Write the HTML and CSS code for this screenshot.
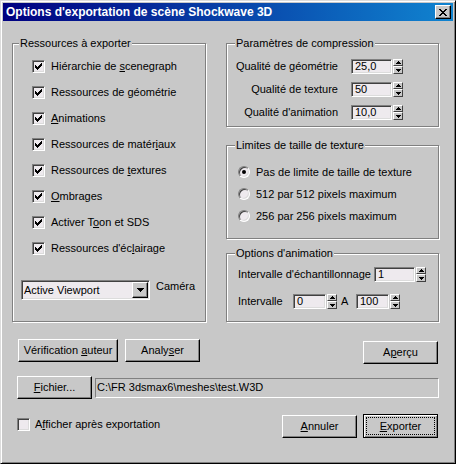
FILE: index.html
```html
<!DOCTYPE html>
<html lang="fr">
<head>
<meta charset="utf-8">
<title>Options d'exportation de scène Shockwave 3D</title>
<link rel="stylesheet" href="styles.css">
</head>
<body>
<div class="window">
  <div class="titlebar">
    <span class="title">Options d'exportation de scène Shockwave 3D</span>
    <span class="close btn"><svg width="8" height="7" viewBox="0 0 8 7" shape-rendering="crispEdges"><path d="M0 0h2v1H0zM6 0h2v1H6zM1 1h2v1H1zM5 1h2v1H5zM2 2h4v1H2zM3 3h2v1H3zM2 4h4v1H2zM1 5h2v1H1zM5 5h2v1H5zM0 6h2v1H0zM6 6h2v1H6z" fill="#000"/></svg></span>
  </div>
  <div class="client">
    <div class="top">
      <div class="group g-res">
        <span class="gtitle">Ressources à exporter</span>
        <div class="checklist">
          <div class="chk"><span class="box sunken"><svg class="tick" width="7" height="7" viewBox="0 0 7 7" shape-rendering="crispEdges"><path d="M0 2h1v3H0zM1 3h1v3H1zM2 4h1v3H2zM3 3h1v3H3zM4 2h1v3H4zM5 1h1v3H5zM6 0h1v3H6z"/></svg></span><span>Hiérarchie de <u>s</u>cenegraph</span></div>
          <div class="chk"><span class="box sunken"><svg class="tick" width="7" height="7" viewBox="0 0 7 7" shape-rendering="crispEdges"><path d="M0 2h1v3H0zM1 3h1v3H1zM2 4h1v3H2zM3 3h1v3H3zM4 2h1v3H4zM5 1h1v3H5zM6 0h1v3H6z"/></svg></span><span>Ressources de géométrie</span></div>
          <div class="chk"><span class="box sunken"><svg class="tick" width="7" height="7" viewBox="0 0 7 7" shape-rendering="crispEdges"><path d="M0 2h1v3H0zM1 3h1v3H1zM2 4h1v3H2zM3 3h1v3H3zM4 2h1v3H4zM5 1h1v3H5zM6 0h1v3H6z"/></svg></span><span><u>A</u>nimations</span></div>
          <div class="chk"><span class="box sunken"><svg class="tick" width="7" height="7" viewBox="0 0 7 7" shape-rendering="crispEdges"><path d="M0 2h1v3H0zM1 3h1v3H1zM2 4h1v3H2zM3 3h1v3H3zM4 2h1v3H4zM5 1h1v3H5zM6 0h1v3H6z"/></svg></span><span>Ressources de matér<u>i</u>aux</span></div>
          <div class="chk"><span class="box sunken"><svg class="tick" width="7" height="7" viewBox="0 0 7 7" shape-rendering="crispEdges"><path d="M0 2h1v3H0zM1 3h1v3H1zM2 4h1v3H2zM3 3h1v3H3zM4 2h1v3H4zM5 1h1v3H5zM6 0h1v3H6z"/></svg></span><span>Ressources de <u>t</u>extures</span></div>
          <div class="chk"><span class="box sunken"><svg class="tick" width="7" height="7" viewBox="0 0 7 7" shape-rendering="crispEdges"><path d="M0 2h1v3H0zM1 3h1v3H1zM2 4h1v3H2zM3 3h1v3H3zM4 2h1v3H4zM5 1h1v3H5zM6 0h1v3H6z"/></svg></span><span><u>O</u>mbrages</span></div>
          <div class="chk"><span class="box sunken"><svg class="tick" width="7" height="7" viewBox="0 0 7 7" shape-rendering="crispEdges"><path d="M0 2h1v3H0zM1 3h1v3H1zM2 4h1v3H2zM3 3h1v3H3zM4 2h1v3H4zM5 1h1v3H5zM6 0h1v3H6z"/></svg></span><span>Activer T<u>o</u>on et SDS</span></div>
          <div class="chk"><span class="box sunken"><svg class="tick" width="7" height="7" viewBox="0 0 7 7" shape-rendering="crispEdges"><path d="M0 2h1v3H0zM1 3h1v3H1zM2 4h1v3H2zM3 3h1v3H3zM4 2h1v3H4zM5 1h1v3H5zM6 0h1v3H6z"/></svg></span><span>Ressources d'éc<u>l</u>airage</span></div>
        </div>
        <div class="camrow">
          <div class="combo sunken"><span class="combo-text">Active Viewport</span><span class="combo-btn btn"><svg width="7" height="4" viewBox="0 0 7 4" shape-rendering="crispEdges"><path d="M0 0h7v1H0zM1 1h5v1H1zM2 2h3v1H2zM3 3h1v1H3z"/></svg></span></div>
          <span class="cam-label">Caméra</span>
        </div>
      </div>
      <div class="rightcol">
        <div class="group g-comp">
          <span class="gtitle">Paramètres de compression</span>
          <div class="field"><span class="flabel">Qualité de géométrie</span><span class="edit sunken w41 ml13">25,0</span><span class="spin"><span class="up"><svg width="5" height="3" viewBox="0 0 5 3" shape-rendering="crispEdges"><path d="M2 0h1v1H2zM1 1h3v1H1zM0 2h5v1H0z"/></svg></span><span class="dn"><svg width="5" height="3" viewBox="0 0 5 3" shape-rendering="crispEdges"><path d="M0 0h5v1H0zM1 1h3v1H1zM2 2h1v1H2z"/></svg></span></span></div>
          <div class="field"><span class="flabel">Qualité de texture</span><span class="edit sunken w41 ml13">50</span><span class="spin"><span class="up"><svg width="5" height="3" viewBox="0 0 5 3" shape-rendering="crispEdges"><path d="M2 0h1v1H2zM1 1h3v1H1zM0 2h5v1H0z"/></svg></span><span class="dn"><svg width="5" height="3" viewBox="0 0 5 3" shape-rendering="crispEdges"><path d="M0 0h5v1H0zM1 1h3v1H1zM2 2h1v1H2z"/></svg></span></span></div>
          <div class="field"><span class="flabel">Qualité d'animation</span><span class="edit sunken w41 ml13">10,0</span><span class="spin"><span class="up"><svg width="5" height="3" viewBox="0 0 5 3" shape-rendering="crispEdges"><path d="M2 0h1v1H2zM1 1h3v1H1zM0 2h5v1H0z"/></svg></span><span class="dn"><svg width="5" height="3" viewBox="0 0 5 3" shape-rendering="crispEdges"><path d="M0 0h5v1H0zM1 1h3v1H1zM2 2h1v1H2z"/></svg></span></span></div>
        </div>
        <div class="group g-lim">
          <span class="gtitle">Limites de taille de texture</span>
          <div class="radio-row"><span class="radio"><span class="dot"></span></span><span>Pas de limite de taille de texture</span></div>
          <div class="radio-row"><span class="radio"></span><span>512 par 512 pixels maximum</span></div>
          <div class="radio-row"><span class="radio"></span><span>256 par 256 pixels maximum</span></div>
        </div>
        <div class="group g-anim">
          <span class="gtitle">Options d'animation</span>
          <div class="arow"><span class="alabel1">Intervalle d'échantillonnage</span><span class="edit sunken w41">1</span><span class="spin"><span class="up"><svg width="5" height="3" viewBox="0 0 5 3" shape-rendering="crispEdges"><path d="M2 0h1v1H2zM1 1h3v1H1zM0 2h5v1H0z"/></svg></span><span class="dn"><svg width="5" height="3" viewBox="0 0 5 3" shape-rendering="crispEdges"><path d="M0 0h5v1H0zM1 1h3v1H1zM2 2h1v1H2z"/></svg></span></span></div>
          <div class="arow arow2"><span class="alabel2">Intervalle</span><span class="edit sunken w33">0</span><span class="spin"><span class="up"><svg width="5" height="3" viewBox="0 0 5 3" shape-rendering="crispEdges"><path d="M2 0h1v1H2zM1 1h3v1H1zM0 2h5v1H0z"/></svg></span><span class="dn"><svg width="5" height="3" viewBox="0 0 5 3" shape-rendering="crispEdges"><path d="M0 0h5v1H0zM1 1h3v1H1zM2 2h1v1H2z"/></svg></span></span><span class="a-label">A</span><span class="edit sunken w33">100</span><span class="spin"><span class="up"><svg width="5" height="3" viewBox="0 0 5 3" shape-rendering="crispEdges"><path d="M2 0h1v1H2zM1 1h3v1H1zM0 2h5v1H0z"/></svg></span><span class="dn"><svg width="5" height="3" viewBox="0 0 5 3" shape-rendering="crispEdges"><path d="M0 0h5v1H0zM1 1h3v1H1zM2 2h1v1H2z"/></svg></span></span></div>
        </div>
      </div>
    </div>
    <div class="row r-buttons">
      <span class="btn b-verif"><span>Vérification <u>a</u>uteur</span></span>
      <span class="btn b-anal"><span>Analy<u>s</u>er</span></span>
      <span class="btn b-apercu"><span>A<u>p</u>erçu</span></span>
    </div>
    <div class="row r-file">
      <span class="btn b-file"><span><u>F</u>ichier...</span></span>
      <span class="path">C:\FR 3dsmax6\meshes\test.W3D</span>
    </div>
    <div class="row r-bottom">
      <span class="box sunken"></span>
      <span class="show-label">A<u>f</u>ficher après exportation</span>
      <span class="btn b-cancel"><span><u>A</u>nnuler</span></span>
      <span class="b-export"><span class="focus"><span><u>E</u>xporter</span></span></span>
    </div>
  </div>
</div>
</body>
</html>
```

FILE: styles.css
```css
* { box-sizing: border-box; margin: 0; padding: 0; }
html, body { width: 456px; height: 464px; overflow: hidden; background: #c8c8c8; }
body { font-family: "Liberation Sans", Arial, sans-serif; font-size: 11px; line-height: 13px; color: #000; }
u { text-decoration: underline; text-underline-offset: 1px; }

.window {
  width: 456px; height: 464px; background: #c8c8c8;
  border: 1px solid; border-color: #dcdcdc #000 #000 #dcdcdc;
  box-shadow: inset 1px 1px #fff, inset -1px -1px #808080;
  padding: 2px; display: flex; flex-direction: column;
}
.titlebar {
  height: 18px; flex: none; display: flex; align-items: flex-start;
  padding-left: 3px; background: linear-gradient(to right, #000080, #1084d0);
}
.title { color: #fff; font-weight: bold; font-size: 12px; line-height: 18px; white-space: nowrap; }

.btn {
  display: flex; align-items: center; justify-content: center; flex: none;
  background: #c8c8c8; border: 1px solid; border-color: #fff #000 #000 #fff;
  box-shadow: inset -1px -1px #808080; white-space: nowrap;
}
.close { margin-left: auto; margin-top: 2px; margin-right: 2px; width: 16px; height: 14px; }
.sunken {
  border: 1px solid; border-color: #808080 #fff #fff #808080;
  box-shadow: inset 1px 1px #404040, inset -1px -1px #dcdcdc;
}

.client { flex: 1; display: flex; flex-direction: column; }
.top { display: flex; margin-top: 22px; padding-left: 9px; flex: none; }
.group {
  position: relative; flex: none; border: 1px solid #808080;
  box-shadow: inset 1px 1px #fff, 1px 1px #fff;
}
.gtitle {
  position: absolute; top: -7px; left: 6px; padding: 0 1px;
  background: #c8c8c8; white-space: nowrap; line-height: 13px;
}
.g-res { width: 194px; height: 279px; }
.rightcol { margin-left: 20px; width: 213px; display: flex; flex-direction: column; flex: none; }
.rightcol .gtitle { left: 8px; }
.g-comp { height: 84px; padding-top: 15px; }
.g-lim { height: 94px; margin-top: 18px; padding: 15px 0 0 11px; }
.g-anim { height: 69px; margin-top: 14px; padding: 13px 0 0 11px; }

.checklist { padding: 9px 0 0 19px; }
.chk { display: flex; height: 26px; padding-top: 7px; gap: 6px; white-space: nowrap; }
.box {
  width: 13px; height: 13px; flex: none; background: #eeeaee;
  display: flex; align-items: center; justify-content: center;
}

.camrow { display: flex; margin-top: 19px; padding-left: 8px; align-items: flex-start; }
.combo { width: 129px; height: 20px; background: #eeeaee; display: flex; align-items: center; padding: 0 1px 0 2px; }
.combo-text { flex: 1; white-space: nowrap; }
.combo-btn { width: 16px; height: 16px; }
.cam-label { margin-left: 6px; }

.field { display: flex; height: 15px; margin-bottom: 8px; }
.flabel { width: 111px; text-align: right; line-height: 15px; white-space: nowrap; }
.edit { height: 15px; background: #eeeaee; line-height: 13px; padding-left: 3px; white-space: nowrap; flex: none; }
.ml13 { margin-left: 13px; }
.w41 { width: 41px; }
.w33 { width: 33px; }
.spin { width: 10px; height: 15px; margin-left: 1px; display: flex; flex-direction: column; flex: none; }
.spin .up, .spin .dn {
  display: flex; align-items: center; justify-content: center;
  background: #c8c8c8; border: 1px solid; border-color: #fff #404040 #404040 #fff;
}
.spin .up { height: 7px; }
.spin .dn { height: 8px; }

.radio-row { display: flex; align-items: center; height: 22px; gap: 6px; white-space: nowrap; }
.radio {
  width: 12px; height: 12px; border-radius: 50%; flex: none;
  border: 1px solid; border-color: #808080 #fff #fff #808080;
  box-shadow: inset 1px 1px #404040, inset -1px -1px #dcdcdc;
  background: #eeeaee; display: flex; align-items: center; justify-content: center;
}
.dot { width: 4px; height: 4px; border-radius: 50%; background: #000; }

.arow { display: flex; height: 15px; }
.arow2 { margin-top: 12px; }
.alabel1 { width: 136px; line-height: 15px; white-space: nowrap; flex: none; }
.alabel2 { width: 55px; line-height: 15px; flex: none; }
.a-label { width: 19px; padding-left: 4px; line-height: 15px; flex: none; }

.row { display: flex; align-items: flex-start; flex: none; }
.r-buttons { margin-top: 17px; padding-left: 15px; padding-right: 15px; }
.b-verif { width: 100px; height: 23px; }
.b-anal { width: 75px; height: 23px; margin-left: 7px; }
.b-apercu { width: 75px; height: 23px; margin-left: auto; margin-top: 2px; }

.r-file { margin-top: 12px; padding-left: 14px; }
.b-file { width: 75px; height: 23px; }
.path {
  width: 344px; height: 20px; margin-left: 3px; margin-top: 2px;
  border: 1px solid; border-color: #808080 #fff #fff #808080;
  padding-left: 1px; line-height: 17px; white-space: nowrap;
}

.r-bottom { margin-top: 15px; padding-left: 14px; padding-right: 15px; }
.r-bottom .box { margin-top: 4px; }
.show-label { margin-left: 5px; margin-top: 4px; white-space: nowrap; }
.b-cancel { width: 75px; height: 23px; margin-left: auto; margin-top: 1px; }
.b-export {
  width: 75px; height: 24px; margin-left: 6px; flex: none; display: flex;
  border: 1px solid #000; box-shadow: inset 1px 1px #fff, inset -1px -1px #808080;
  padding: 2px; background: #c8c8c8;
}
.focus { flex: 1; border: 1px dotted #000; display: flex; align-items: center; justify-content: center; white-space: nowrap; }
```
